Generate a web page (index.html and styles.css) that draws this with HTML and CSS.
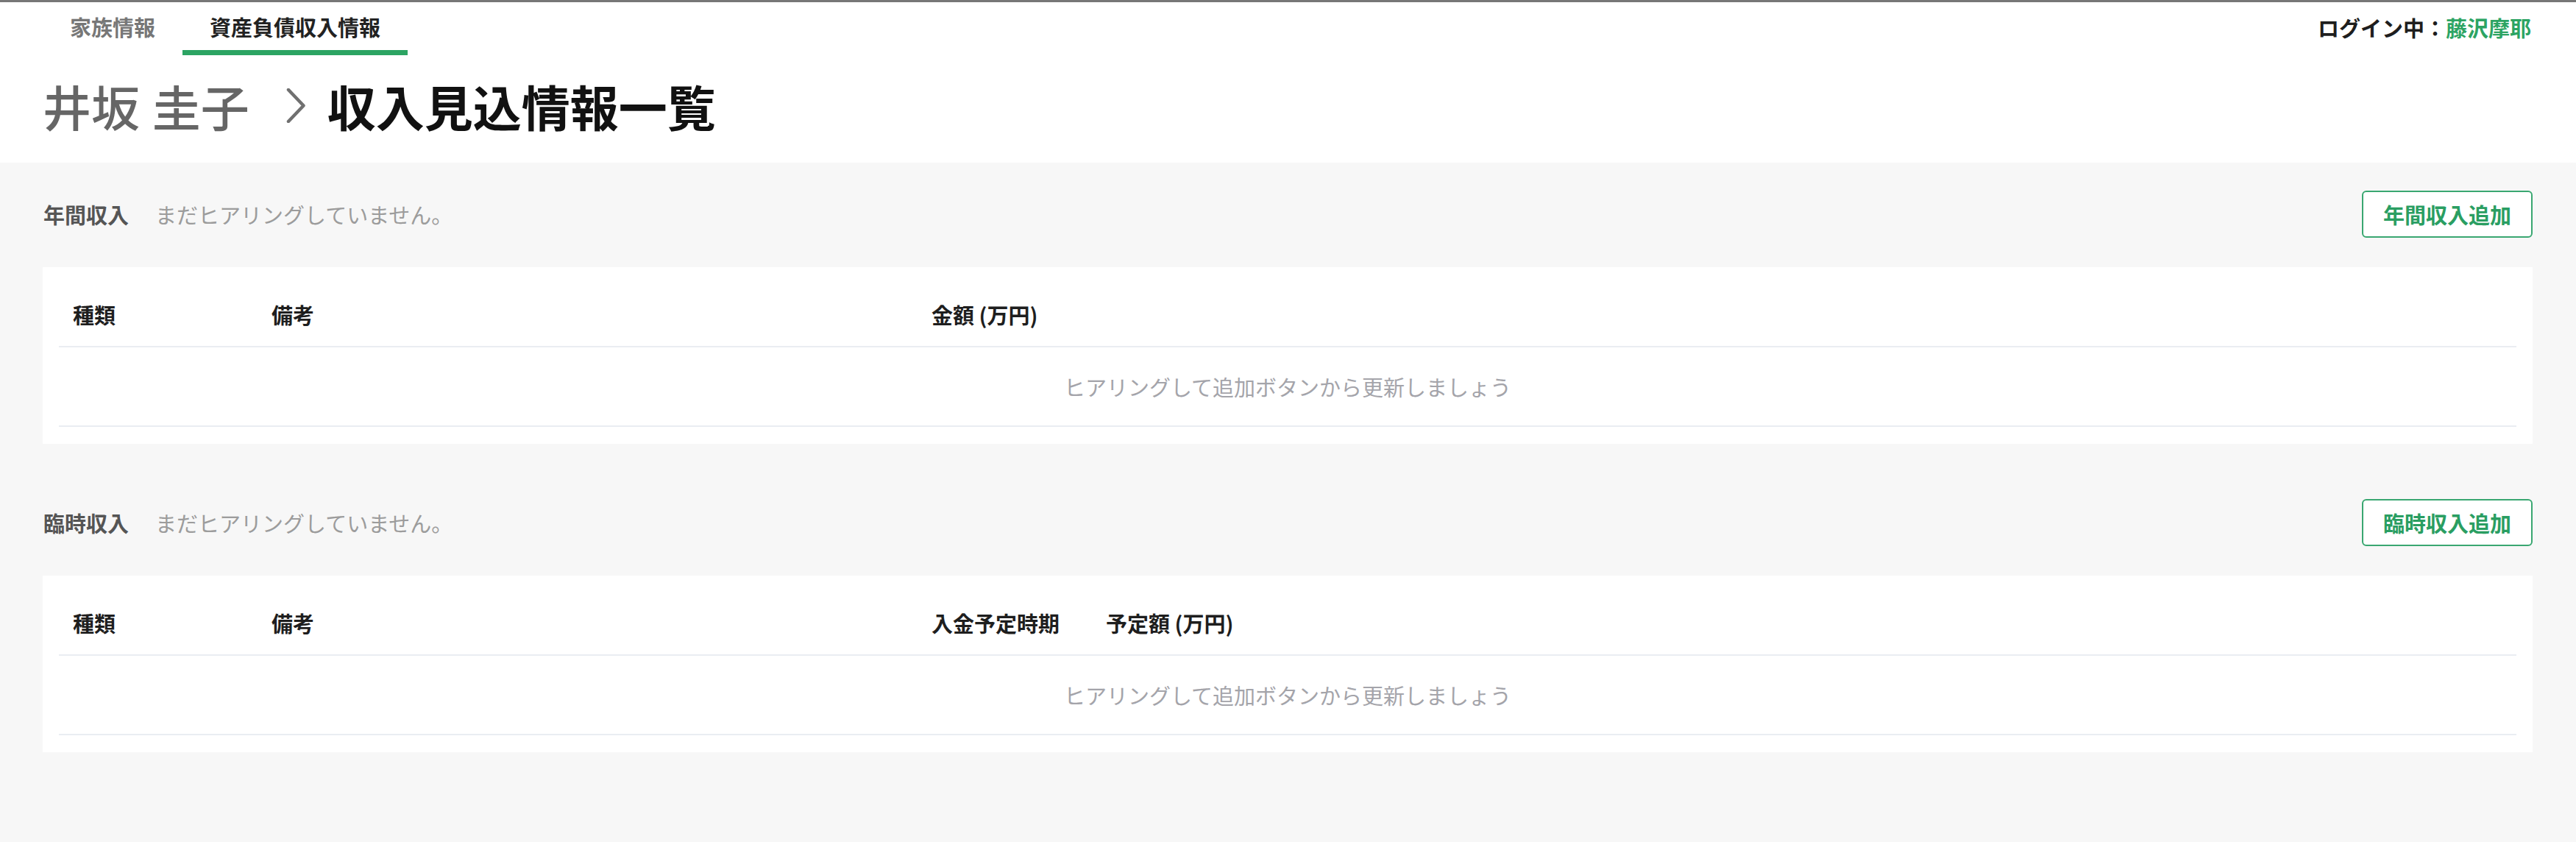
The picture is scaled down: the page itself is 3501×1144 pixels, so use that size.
FILE: index.html
```html
<!DOCTYPE html>
<html lang="ja">
<head>
<meta charset="utf-8">
<title>収入見込情報一覧</title>
<link rel="stylesheet" href="styles.css">
</head>
<body>
<header class="top">
  <nav class="nav">
    <ul class="tabs">
      <li class="tab">家族情報</li>
      <li class="tab tab--active">資産負債収入情報</li>
    </ul>
    <div class="login">ログイン中：<span class="login__name">藤沢摩耶</span></div>
  </nav>
  <h1 class="title">
    <span class="title__client">井坂 圭子</span>
    <svg class="title__chev" viewBox="0 0 26 47" width="26" height="47" aria-hidden="true">
      <polyline points="3,2 23.5,23.5 3,45" fill="none" stroke="#707070" stroke-width="4.5" stroke-linecap="round" stroke-linejoin="round"/>
    </svg>
    <span class="title__page">収入見込情報一覧</span>
  </h1>
</header>

<main class="main">
  <section class="section">
    <div class="section__head">
      <h2 class="section__title">年間収入</h2>
      <p class="section__note">まだヒアリングしていません。</p>
      <button class="btn" type="button">年間収入追加</button>
    </div>
    <div class="card">
      <div class="row row--head cols-annual">
        <div class="cell">種類</div>
        <div class="cell">備考</div>
        <div class="cell">金額 (万円)</div>
      </div>
      <div class="row row--body">ヒアリングして追加ボタンから更新しましょう</div>
    </div>
  </section>

  <section class="section">
    <div class="section__head">
      <h2 class="section__title">臨時収入</h2>
      <p class="section__note">まだヒアリングしていません。</p>
      <button class="btn" type="button">臨時収入追加</button>
    </div>
    <div class="card">
      <div class="row row--head cols-temp">
        <div class="cell">種類</div>
        <div class="cell">備考</div>
        <div class="cell">入金予定時期</div>
        <div class="cell">予定額 (万円)</div>
      </div>
      <div class="row row--body">ヒアリングして追加ボタンから更新しましょう</div>
    </div>
  </section>
</main>
</body>
</html>
```

FILE: styles.css
```css
* { box-sizing: border-box; }

html, body {
  margin: 0;
  padding: 0;
}

body {
  min-height: 100vh;
  background: #f7f7f7;
  font-family: "Noto Sans CJK JP", "Noto Sans", sans-serif;
  font-size: 29px;
  line-height: 1;
  color: #222;
}

/* ---------- header ---------- */
.top {
  background: #fff;
  border-top: 3px solid #777;
}

.nav {
  display: flex;
  justify-content: space-between;
  align-items: flex-start;
  padding: 0 61px 0 58px;
}

.tabs {
  display: flex;
  list-style: none;
  margin: 0;
  padding: 0;
}

.tab {
  padding: 19px 37px 17px;
  font-size: 29px;
  line-height: 29px;
  font-weight: 700;
  color: #777;
  border-bottom: 7px solid transparent;
}

.tab--active {
  color: #222;
  border-bottom-color: #2ca463;
}

.login {
  padding-top: 20px;
  font-size: 29px;
  line-height: 29px;
  font-weight: 700;
  color: #1e1e1e;
}

.login__name {
  color: #2ca463;
}

.title {
  display: flex;
  align-items: center;
  margin: 0;
  padding: 36px 0 45px 58px;
  font-size: 66px;
  line-height: 65px;
}

.title__client {
  font-weight: 500;
  color: #666;
  word-spacing: 2px;
}

.title__chev {
  display: block;
  margin: 0 30px 0 50px;
}

.title__page {
  font-weight: 700;
  color: #111;
}

/* ---------- main ---------- */
.main {
  padding: 38px 59px 0 58px;
}

.section + .section {
  margin-top: 75px;
}

.section__head {
  display: flex;
  align-items: center;
  height: 64px;
}

.section__title {
  margin: 0 0 0 1px;
  font-size: 29px;
  font-weight: 700;
  color: #555;
}

.section__note {
  margin: 0 0 0 36px;
  font-size: 29px;
  color: #9c9c9c;
}

.btn {
  margin-left: auto;
  height: 64px;
  padding: 0 27px;
  border: 2px solid #3aa771;
  border-radius: 6px;
  background: #fff;
  color: #2a9e62;
  font-family: inherit;
  font-size: 29px;
  font-weight: 700;
  line-height: 1;
}

.card {
  margin-top: 40px;
  background: #fff;
  padding: 22px 22px 23px;
}

.row {
  border-bottom: 2px solid #eaedf2;
}

.row--head {
  display: grid;
  align-items: center;
  height: 87px;
  font-weight: 700;
  color: #1e1e1e;
}

.cols-annual {
  grid-template-columns: 270px 897px 1fr;
}

.cols-temp {
  grid-template-columns: 270px 897px 237px 1fr;
}

.cell {
  padding: 0 19px;
  white-space: nowrap;
}

.row--body {
  display: flex;
  align-items: center;
  justify-content: center;
  height: 108px;
  color: #a4a4aa;
}
```
